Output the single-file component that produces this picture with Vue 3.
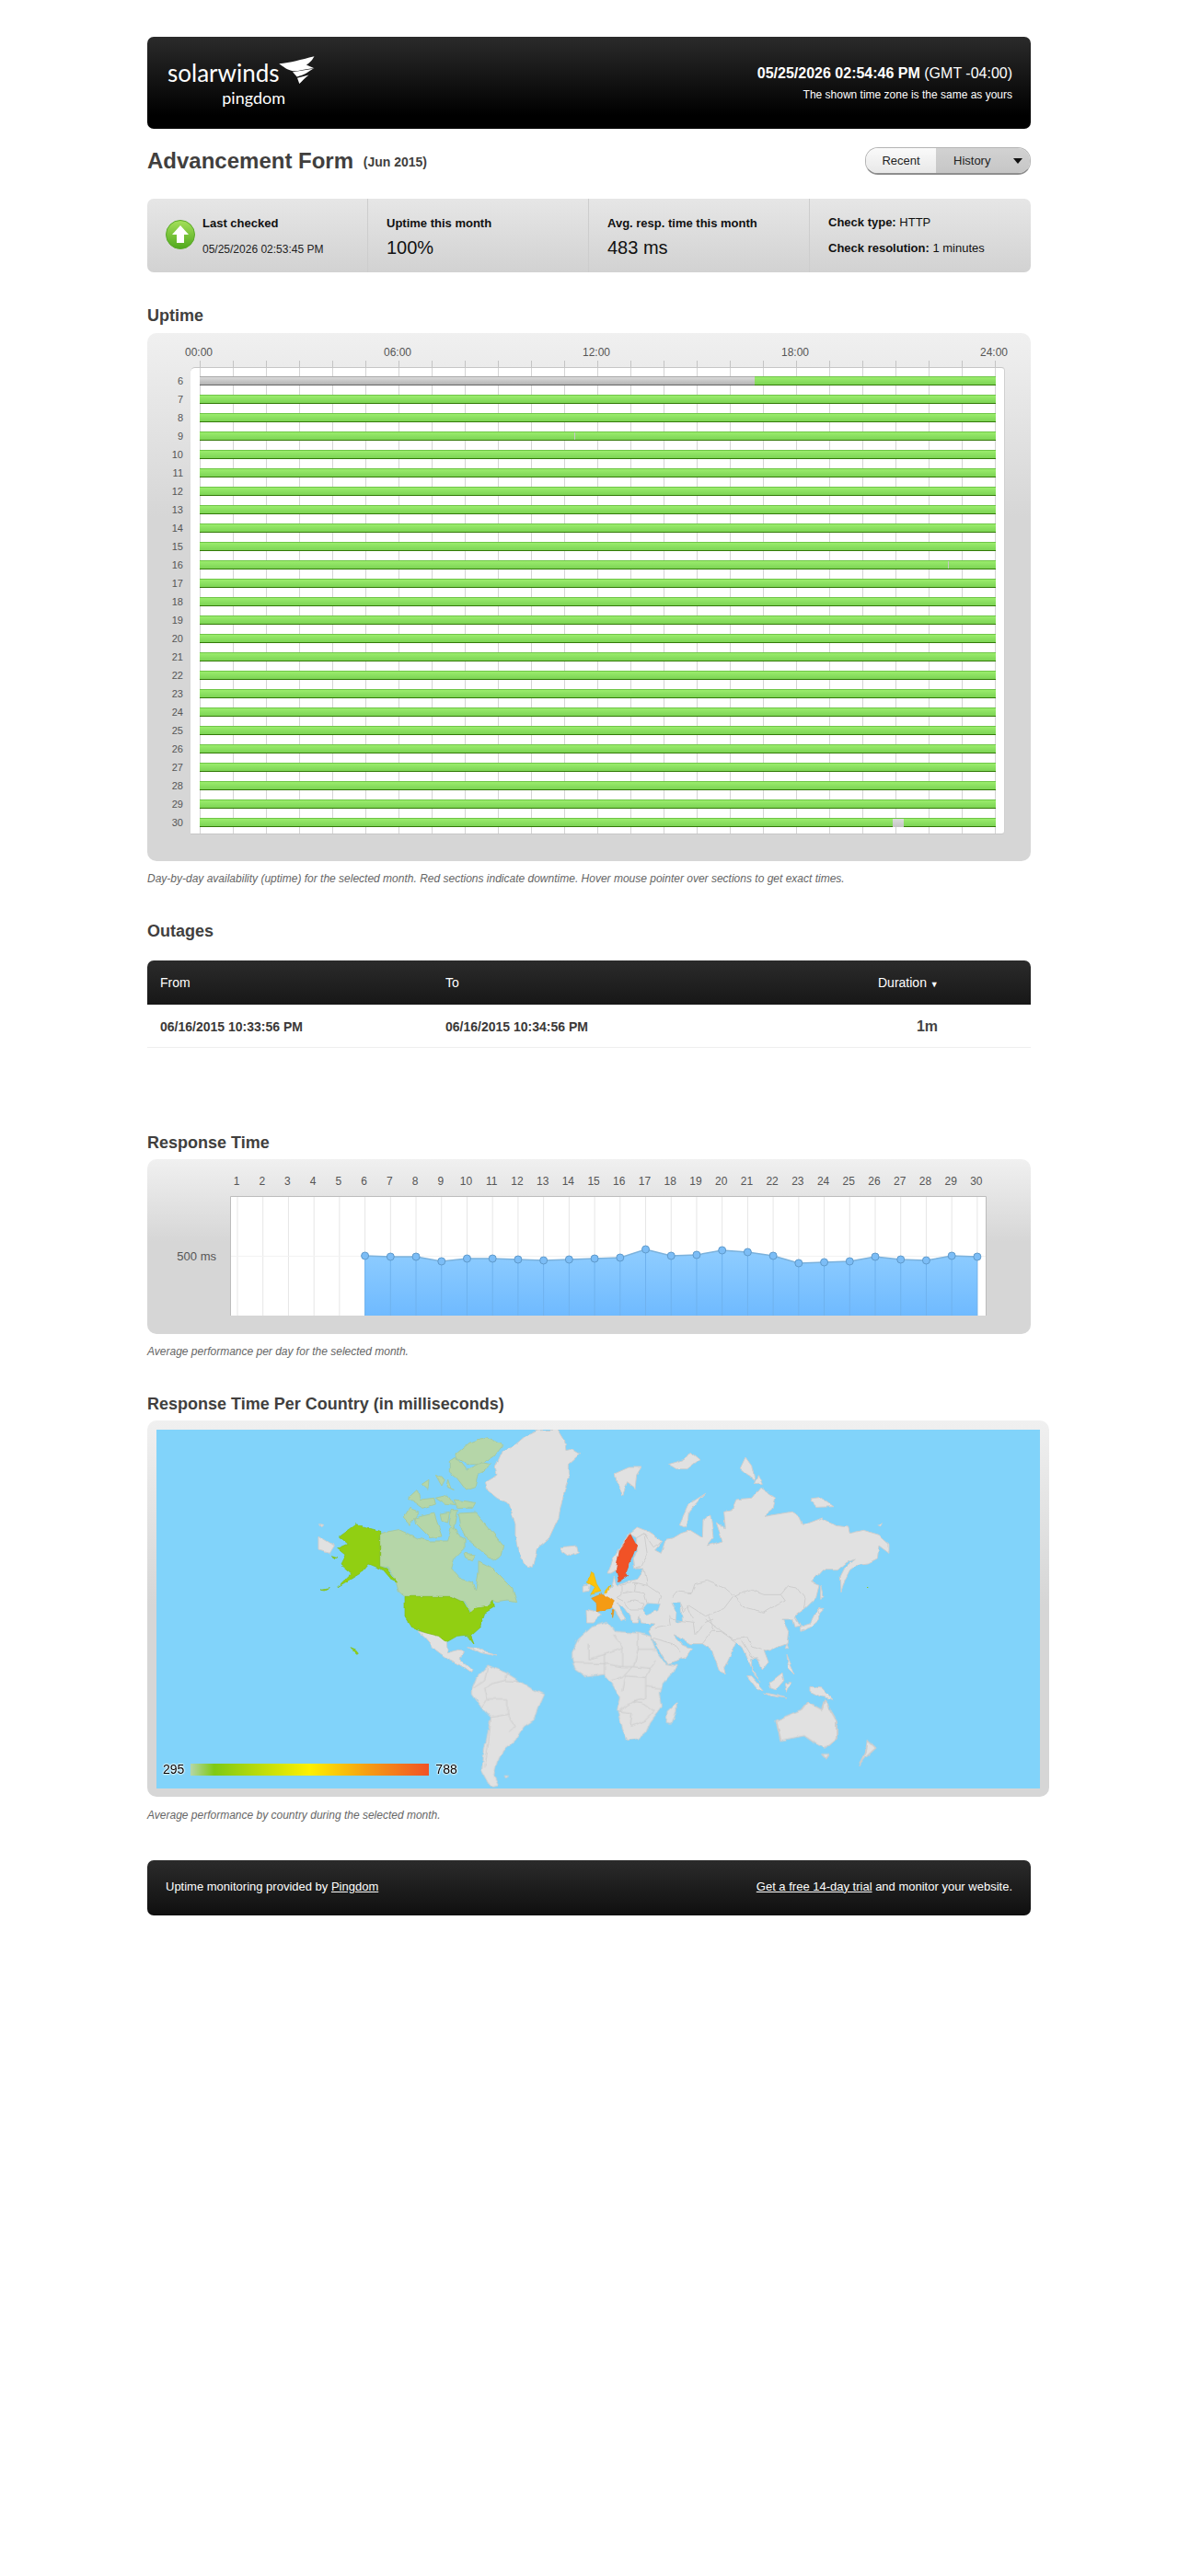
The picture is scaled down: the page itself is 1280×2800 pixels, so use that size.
<script setup>
import { computed } from 'vue'

const days = Array.from({ length: 25 }, (_, i) => i + 6)
const hours = ['00:00', '06:00', '12:00', '18:00', '24:00']

// uptime rows: down/unknown parts in px from the start of the bar
const unknown = { 6: [[0, 603, 'none']], 9: [[407, 1, 'tick']], 16: [[813, 1, 'tick']], 30: [[753, 12, 'seg']] }

const monthDays = Array.from({ length: 30 }, (_, i) => i + 1)
const dayX = d => 258 + (d - 1) * 27.72
const resp = { 6: 1365, 7: 1366, 8: 1366, 9: 1371, 10: 1368, 11: 1368, 12: 1369, 13: 1370, 14: 1369, 15: 1368, 16: 1367, 17: 1358, 18: 1365, 19: 1364, 20: 1359, 21: 1361, 22: 1365, 23: 1373, 24: 1372, 25: 1371, 26: 1366, 27: 1369, 28: 1370, 29: 1365, 30: 1366 }
const points = computed(() => days.map(d => ({ d, x: dayX(d), y: resp[d] })))
const linePts = computed(() => points.value.map(p => `${p.x},${p.y}`).join(' '))
const areaPts = computed(() => `${dayX(6)},1430 ${linePts.value} ${dayX(30)},1430`)
</script>

<template>
  <div class="page">
    <header class="top">
      <div class="logo">
        <div class="logo-sw">solarwinds</div>
        <div class="logo-pd">pingdom</div>
        <svg class="flame" viewBox="430 60 120 100" width="40" height="33">
          <path d="M430 88C470 85 500 75 546 64 537 80 530 86 520 92L546 103C510 105 490 115 475 112 455 108 445 98 430 88Z" fill="#fff" />
          <path d="M475 115 542 105C525 116 515 125 489 131Z" fill="#fff" />
          <path d="M490 135 528 125C515 135 505 146 497 154Z" fill="#fff" />
        </svg>
      </div>
      <div class="clock">
        <div class="clock-now"><b>05/25/2026 02:54:46 PM</b> (GMT -04:00)</div>
        <div class="clock-note">The shown time zone is the same as yours</div>
      </div>
    </header>

    <div class="title-row">
      <h1>Advancement Form <small>(Jun 2015)</small></h1>
      <div class="switch">
        <span class="sw-recent">Recent</span>
        <span class="sw-history">History<i class="caret"></i></span>
      </div>
    </div>

    <section class="stats">
      <div class="stat stat-first">
        <svg class="up-icon" viewBox="0 0 32 32" width="32" height="32">
          <defs>
            <linearGradient id="upg" x1="0" y1="0" x2="0" y2="1">
              <stop offset="0" stop-color="#a5e05a" />
              <stop offset="1" stop-color="#4fa81c" />
            </linearGradient>
          </defs>
          <circle cx="16" cy="16" r="15.5" fill="url(#upg)" stroke="#5aa82a" />
          <path d="M16 6 25 16H20V25H12V16H7Z" fill="#fff" />
        </svg>
        <div>
          <div class="stat-label">Last checked</div>
          <div class="stat-date">05/25/2026 02:53:45 PM</div>
        </div>
      </div>
      <div class="stat">
        <div>
          <div class="stat-label">Uptime this month</div>
          <div class="stat-value">100%</div>
        </div>
      </div>
      <div class="stat">
        <div>
          <div class="stat-label">Avg. resp. time this month</div>
          <div class="stat-value">483 ms</div>
        </div>
      </div>
      <div class="stat">
        <div class="stat-check">
          <div><b>Check type:</b> HTTP</div>
          <div><b>Check resolution:</b> 1 minutes</div>
        </div>
      </div>
    </section>

    <h2 class="h-uptime">Uptime</h2>
    <section class="panel uptime">
      <div class="hours">
        <span v-for="h in hours" :key="h">{{ h }}</span>
      </div>
      <div class="ticks"></div>
      <div class="up-body">
        <div class="up-labels">
          <div v-for="d in days" :key="d">{{ d }}</div>
        </div>
        <div class="up-chart">
          <div class="up-grid">
            <div v-for="d in days" :key="d" class="bar">
              <span
                v-for="(u, i) in unknown[d] || []"
                :key="i"
                :class="'bar-' + u[2]"
                :style="{ left: u[0] + 'px', width: u[1] + 'px' }"
              ></span>
            </div>
          </div>
        </div>
      </div>
    </section>
    <p class="note">Day-by-day availability (uptime) for the selected month. Red sections indicate downtime. Hover mouse pointer over sections to get exact times.</p>

    <h2 class="h-out">Outages</h2>
    <section class="outages">
      <div class="out-head">
        <span class="c-from">From</span>
        <span class="c-to">To</span>
        <span class="c-dur">Duration <i>▼</i></span>
      </div>
      <div class="out-row">
        <span class="c-from">06/16/2015 10:33:56 PM</span>
        <span class="c-to">06/16/2015 10:34:56 PM</span>
        <span class="c-len">1m</span>
      </div>
    </section>

    <h2 class="h-resp">Response Time</h2>
    <section class="panel resp">
      <svg viewBox="160 1260 960 190" width="960" height="190">
        <defs>
          <linearGradient id="areag" x1="0" y1="0" x2="0" y2="1">
            <stop offset="0" stop-color="#8fcdff" />
            <stop offset="1" stop-color="#6fbaff" />
          </linearGradient>
        </defs>
        <rect x="250.5" y="1300.5" width="821" height="129.5" fill="#fff" />
        <line v-for="d in monthDays" :key="'g' + d" :x1="dayX(d)" :x2="dayX(d)" y1="1300" y2="1430" stroke="#e6e6e6" />
        <line x1="250" x2="1071" y1="1365.5" y2="1365.5" stroke="#f2f2f2" />
        <path d="M250.5 1430V1300.5H1071.5V1430" fill="none" stroke="#bcbcbc" />
        <polygon :points="areaPts" fill="url(#areag)" />
        <line v-for="d in days" :key="'a' + d" :x1="dayX(d)" :x2="dayX(d)" :y1="resp[d]" y2="1430" stroke="#6fb2ee" />
        <polyline :points="linePts" fill="none" stroke="#7cb2dc" stroke-width="1.5" />
        <circle v-for="p in points" :key="p.d" :cx="p.x" :cy="p.y" r="4" fill="#7cbdf6" stroke="#5f9acb" />
        <text v-for="d in monthDays" :key="'t' + d" :x="dayX(d) - 1" y="1288" text-anchor="middle" class="day-label">{{ d }}</text>
        <text x="235" y="1370" text-anchor="end" class="ms-label">500 ms</text>
      </svg>
    </section>
    <p class="note">Average performance per day for the selected month.</p>

    <h2 class="h-map">Response Time Per Country (in milliseconds)</h2>
    <section class="panel map-panel">
      <div class="map">
        <svg viewBox="170 1554 960 390" width="960" height="390">
          <defs>
            <!-- roughens the hand traced coasts a bit -->
            <filter id="coast" filterUnits="userSpaceOnUse" x="170" y="1554" width="960" height="390" color-interpolation-filters="sRGB">
              <feTurbulence type="fractalNoise" baseFrequency="0.09" numOctaves="2" seed="4" />
              <feDisplacementMap in="SourceGraphic" scale="4" xChannelSelector="R" yChannelSelector="G" />
            </filter>
          </defs>
          <g filter="url(#coast)">
            <!-- Americas north + Atlantic side, traced at 3x from the top left crop -->
            <g transform="translate(320 1540) scale(.33333)">
              <path class="land" d="M622 212 660 190 655 165 680 110 715 95 750 65 790 45 860 42 880 75 885 110 905 105 932 122 895 155 895 200 880 240 860 330 830 395 790 430 775 490 755 485 730 440 720 390 720 350 700 285 660 265 630 240Z" />
              <path class="land" d="M870 425 920 420 925 440 890 455 870 440Z" />
              <path class="land" d="M1045 185 1090 165 1130 165 1115 190 1110 235 1085 215 1070 255 1050 215Z" />
              <path class="land" d="M78 388 130 420 115 445 78 435Z" />
              <path class="land" d="M80 350 92 352 88 358Z" />
              <path class="land" d="M402 700 430 705 470 715 495 735 500 770 530 760 550 762 540 790 580 825 575 835 540 810 500 790 460 760 425 720Z" />
              <path class="land" d="M560 752 600 755 660 780 610 770Z" />
              <path class="land" d="M940 550 965 545 960 565 940 568Z" />
              <path class="land" d="M948 628 985 635 1000 645 975 672 950 672Z" />
              <g class="ca">
                <path d="M278 380 340 368 400 395 440 405 500 405 515 345 535 385 555 395 555 430 520 465 512 495 545 530 580 540 590 570 600 510 600 470 640 490 680 530 710 560 725 605 695 600 660 605 650 598 630 615 575 640 555 605 510 586 360 586 340 570 325 520 300 490 278 488Z" />
                <path d="M528 120 570 85 625 65 680 92 650 130 600 155 560 155 530 135Z" />
                <path d="M505 145 525 130 560 175 610 150 640 155 600 190 590 230 560 240 530 200 505 180Z" />
                <path d="M535 315 590 312 640 370 680 420 672 455 650 470 600 430 565 400 545 370Z" />
                <path d="M390 330 455 315 480 390 440 395 395 350Z" />
                <path d="M355 330 375 298 405 310 375 352Z" />
                <path d="M370 265 400 238 410 270 455 265 460 285 420 298 395 280Z" />
                <path d="M460 265 500 255 525 290 490 285Z" />
                <path d="M520 270 590 280 580 298 530 298Z" />
                <path d="M475 315 505 310 500 345 480 340Z" />
                <path d="M510 305 532 305 520 370 505 350Z" />
                <path d="M460 190 490 205 480 225Z" />
                <path d="M415 220 438 205 435 238Z" />
                <path d="M500 205 510 235 520 238 495 228Z" />
                <path d="M555 445 590 450 580 470 560 462Z" />
              </g>
              <g class="us">
                <path d="M200 350 278 372 278 488 300 495 335 540 320 535 290 500 240 480 215 510 140 555 185 510 150 480 165 450 140 430 175 415 145 390Z" />
                <path d="M360 586 510 586 550 605 570 640 590 622 635 615 648 598 652 620 620 640 605 685 575 712 586 740 565 712 530 715 495 735 470 715 430 705 385 690 360 650Z" />
                <path d="M183 755 200 762 208 772 203 775Z" />
                <path d="M118 452 138 458 132 461Z" />
                <path d="M88 565 115 560 100 567Z" />
              </g>
            </g>

            <!-- Eurasia -->
            <g transform="translate(660 1560) scale(.33333)">
              <path class="land" d="M125 310 180 345 155 375 175 385 190 340 215 335 240 320 270 310 310 335 312 275 335 258 342 300 345 335 325 360 375 345 355 285 385 305 380 250 405 245 420 210 470 205 498 172 548 205 540 240 510 265 570 255 600 250 625 265 635 295 700 270 745 295 785 300 790 320 835 310 885 325 918 355 918 385 885 360 880 405 850 420 810 425 790 440 775 470 762 512 760 460 775 430 805 405 780 415 750 440 700 440 665 480 690 490 680 530 640 570 610 590 628 622 612 625 605 600 570 600 590 640 585 680 545 695 530 705 510 700 525 740 505 765 490 725 470 730 470 770 500 805 475 770 440 690 420 675 380 760 385 778 365 770 340 700 310 680 270 680 230 655 215 650 245 685 275 695 255 725 195 745 145 660 135 640 155 615 110 612 105 590 100 612 85 612 70 585 55 565 30 550 60 600 45 605 20 565 -10 545 -10 515 15 495 22 462 30 490 95 470 120 435 90 435 85 405 95 380 95 335Z" />
              <path class="water" d="M112 570 130 548 172 550 165 572 125 585Z" />
              <path class="water" d="M212 545 238 545 245 605 222 610 225 575Z" />
              <path class="lines" d="M210 530 225 510 275 515 285 485 325 475 360 490 385 500 415 525 470 505 510 520 565 520 590 490 615 495 645 535 640 570M415 525 450 565 510 580 560 550 580 540 565 520M410 525 380 565 345 580 320 590 265 555 250 575 240 550M320 600 360 630 410 665 455 660 470 690 500 700M205 600 280 610 285 650 320 610 345 600M310 680 340 640 370 640 420 675M440 670 470 720 500 735M145 660 215 680 240 710M40 490 90 480 130 490 175 520 165 550M45 490 45 520 30 530 60 545 90 540 120 550 110 570 75 570 55 545M90 480 85 510 50 515M85 510 120 515 130 550M130 490 120 435M200 590 205 620 155 630M260 555 280 600M330 590 350 640" />
              <path class="land" d="M0 450 20 400 70 325 100 300 125 310 180 345 150 365 120 320 95 335 75 323 40 375 28 440 12 450Z" />
              <path class="land" d="M95 335 120 320 130 390 110 430 90 435 85 405 95 380Z" />
              <path class="land" d="M235 290 265 225 320 190 300 210 265 250 260 300Z" />
              <path class="land" d="M432 110 450 72 470 100 480 145 455 130Z" />
              <path class="land" d="M478 160 490 128 505 160Z" />
              <path class="land" d="M660 210 700 205 735 230 680 232Z" />
              <path class="land" d="M200 95 250 80 270 55 300 80 260 110 225 110Z" />
              <path class="land" d="M880 295 895 290 890 300Z" />
              <path class="land" d="M455 785 470 785 510 830 490 830Z" />
              <path class="land" d="M510 840 560 850 585 858 530 850Z" />
              <path class="land" d="M525 810 570 775 575 800 550 830 530 825Z" />
              <path class="land" d="M580 810 600 805 585 838Z" />
              <path class="land" d="M660 820 700 825 735 862 690 850 660 835Z" />
              <path class="land" d="M585 715 595 740 612 780 590 760Z" />
              <path class="land" d="M585 680 590 695 580 695Z" />
              <path class="land" d="M680 575 692 560 692 600 665 625 630 640 628 625 660 615Z" />
              <path class="land" d="M685 565 705 565 690 580Z" />
              <path class="land" d="M695 490 705 530 695 535Z" />
              <path class="se" d="M75 323 95 360 60 450 68 455 38 476 28 440 40 375Z" />
              <rect x="845" y="495" width="5" height="3" fill="#8ec81a" />
            </g>

            <!-- South America + Africa -->
            <g transform="translate(480 1720) scale(.33333)">
              <path class="land" d="M100 350 120 300 150 270 210 295 250 320 290 345 335 365 315 410 305 445 268 470 240 515 200 545 180 590 170 630 185 660 160 665 130 610 140 540 160 440 130 410 100 365Z" />
              <path class="lines" d="M150 270 140 320 100 350M140 345 150 380 130 410M140 345 165 330 205 320 250 322M150 380 215 380 215 430 240 470 220 490M160 440 215 430M160 445 150 540 140 600M215 295 205 320" />
              <path class="land" d="M205 630 218 632 208 638Z" />
              <path class="land" d="M425 255 425 225 445 185 490 145 540 130 565 160 640 165 680 175 700 225 730 265 770 272 720 330 712 360 718 405 680 455 665 490 640 510 605 515 590 480 572 415 580 375 555 330 530 300 470 308 435 285Z" />
              <path class="lines" d="M480 200 480 250 530 235 590 215 560 170M590 215 590 275M640 165 640 218 695 218M640 218 625 275 590 275 530 265 530 235M425 262 530 265 530 300M625 275 680 280 700 255M555 320 590 310 620 275M680 280 665 310 600 305 590 355M665 310 665 380 620 390 575 420 620 425 615 470 665 450M665 340 715 345M620 390 655 395 690 420 660 450" />
              <path class="land" d="M765 392 765 420 750 462 732 460 735 420Z" />
            </g>

            <!-- Australia + NZ -->
            <g transform="translate(150 1500) scale(.63776 .33333)">
              <path class="land" d="M1087 1110 1130 1075 1140 1050 1165 1075 1170 1045 1190 1110 1190 1170 1170 1200 1150 1180 1135 1160 1095 1175Z" />
              <path class="land" d="M1165 1220 1178 1220 1172 1235Z" />
              <path class="land" d="M1243 1175 1257 1200 1240 1230 1228 1258 1240 1215Z" />
            </g>

            <!-- Western Europe on top of Eurasia -->
            <g transform="translate(320 1540) scale(.33333)">
              <path class="gb" d="M965 505 975 510 985 545 1000 570 965 580 980 555 955 540Z" />
              <path class="gb" d="M1010 575 1028 552 1020 575Z" />
              <path class="fr" d="M1000 578 1025 590 1042 602 1030 625 985 635 985 608 968 592Z" />
              <path class="fr" d="M1036 628 1042 630 1037 655Z" />
            </g>
          </g>
        </svg>
        <div class="legend">
          <span>295</span>
          <i class="legend-bar"></i>
          <span>788</span>
        </div>
      </div>
    </section>
    <p class="note note-map">Average performance by country during the selected month.</p>

    <footer class="foot">
      <span>Uptime monitoring provided by <a href="#">Pingdom</a></span>
      <span><a href="#">Get a free 14-day trial</a> and monitor your website.</span>
    </footer>
  </div>
</template>

<style scoped>
.page {
  width: 960px;
  margin: 0 auto;
  padding-top: 40px;
  font-family: "Liberation Sans", Arial, sans-serif;
  color: #444;
}
.top {
  height: 100px;
  border-radius: 7px;
  background: linear-gradient(#2b2b2b, #000 85%);
  display: flex;
  justify-content: space-between;
  align-items: center;
  padding: 0 20px;
  box-sizing: border-box;
  color: #fff;
}
.logo {
  position: relative;
  width: 140px;
  height: 62px;
  margin-top: 6px;
  text-align: right;
  color: #fff;
  font-family: Lato, "Open Sans", sans-serif;
  font-weight: 400;
}
.logo-sw {
  font-size: 26px;
  line-height: 30px;
  width: 130px;
  margin-left: 2px;
  text-align: left;
  margin-top: 2px;
}
.logo-pd {
  font-size: 18px;
  line-height: 20px;
  width: 130px;
  margin-top: 2px;
}
.flame {
  position: absolute;
  left: 123px;
  top: -2px;
}
.clock {
  text-align: right;
}
.clock-now {
  font-size: 16px;
  line-height: 20px;
}
.clock-note {
  font-size: 12px;
  line-height: 16px;
  margin-top: 5px;
}
.title-row {
  margin-top: 20px;
  height: 30px;
  display: flex;
  justify-content: space-between;
  align-items: center;
}
h1 {
  margin: 0;
  font-size: 24px;
  line-height: 30px;
  color: #413f3e;
}
h1 small {
  font-size: 14px;
  margin-left: 4px;
  vertical-align: 2px;
}
.switch {
  display: flex;
  width: 180px;
  height: 30px;
  box-sizing: border-box;
  border: 1px solid #b4b4b4;
  border-bottom: 2px solid #8e8e8e;
  border-radius: 14px;
  overflow: hidden;
  font-size: 13px;
  color: #222;
  line-height: 27px;
}
.sw-recent {
  width: 76px;
  text-align: center;
  background: linear-gradient(#fafafa, #e8e8e8);
}
.sw-history {
  flex: 1;
  padding-left: 19px;
  background: linear-gradient(#d2d2d2, #c6c6c6);
  position: relative;
}
.caret {
  position: absolute;
  right: 8px;
  top: 11px;
  border: 5px solid transparent;
  border-top: 6px solid #111;
  border-bottom: 0;
}
.stats {
  margin-top: 26px;
  height: 80px;
  border-radius: 7px;
  background: linear-gradient(#e6e6e6, #d2d2d2);
  display: flex;
  color: #111;
}
.stat {
  width: 240px;
  box-sizing: border-box;
  padding: 19px 0 0 20px;
  border-left: 1px solid #cdcdcd;
}
.stat:first-child {
  border-left: 0;
}
.stat-first {
  width: 239px;
  padding-left: 20px;
  display: flex;
  gap: 8px;
}
.up-icon {
  margin-top: 4px;
}
.stat-label {
  font-size: 13px;
  font-weight: bold;
  line-height: 16px;
}
.stat-date {
  font-size: 12px;
  line-height: 16px;
  margin-top: 12px;
  color: #222;
}
.stat-value {
  font-size: 20px;
  line-height: 24px;
  margin-top: 6px;
}
.stat-check {
  font-size: 13px;
  line-height: 16px;
}
.stat-check div + div {
  margin-top: 12px;
}
.stat:last-child {
  padding-top: 18px;
}
h2 {
  margin: 0;
  font-size: 18px;
  line-height: 20px;
  color: #413f3e;
}
.h-uptime {
  margin-top: 37px;
}
.panel {
  border-radius: 10px;
  background: linear-gradient(#f0f0f0, #d6d6d6 200px);
}
.uptime {
  margin-top: 9px;
  height: 574px;
  box-sizing: border-box;
  padding-top: 14px;
}
.hours {
  display: flex;
  justify-content: space-between;
  width: 904px;
  margin-left: 36px;
  height: 16px;
  font-size: 12px;
  line-height: 14px;
  color: #555;
}
.hours span {
  width: 40px;
  text-align: center;
}
.ticks {
  margin-left: 57px;
  width: 865px;
  height: 7px;
  background: repeating-linear-gradient(90deg, #c4c4c4 0 1px, transparent 1px 36px);
}
.up-body {
  display: flex;
}
.up-labels {
  width: 47px;
  box-sizing: border-box;
  padding: 5px 8px 0 0;
  text-align: right;
  font-size: 11px;
  line-height: 20px;
  color: #555;
}
.up-chart {
  width: 885px;
  height: 508px;
  box-sizing: border-box;
  background: #fff;
  border-top: 1px solid #c6c6c6;
  border-bottom: 1px solid #c6c6c6;
  border-right: 1px solid #d0d0d0;
  border-radius: 5px 4px 4px 0;
  padding-left: 10px;
}
.up-grid {
  width: 865px;
  height: 506px;
  padding-top: 9px;
  box-sizing: border-box;
  background: repeating-linear-gradient(90deg, #d4d4d4 0 1px, transparent 1px 36px);
}
.bar {
  position: relative;
  height: 10px;
  margin-bottom: 10px;
  box-sizing: border-box;
  border-top: 1px solid #70c648;
  border-bottom: 1px solid #337a08;
  background: linear-gradient(#9aec6c, #7dd455);
}
.bar-none {
  position: absolute;
  top: -1px;
  bottom: -1px;
  box-sizing: border-box;
  border-top: 1px solid #a8a8a8;
  border-bottom: 1px solid #666;
  background: linear-gradient(#dadada, #b4b4b4);
}
.bar-tick {
  position: absolute;
  top: 0;
  bottom: 0;
  background: #c8c8c8;
}
.bar-seg {
  position: absolute;
  top: 0;
  bottom: -1px;
  background: linear-gradient(#dcdcdc, #c4c4c4);
}
.note {
  margin: 11px 0 0;
  font-size: 12px;
  line-height: 16px;
  font-style: italic;
  color: #666;
}
.h-out {
  margin-top: 39px;
}
.outages {
  margin-top: 22px;
}
.out-head {
  height: 48px;
  border-radius: 7px 7px 0 0;
  background: linear-gradient(#2b2b2b, #171717);
  color: #fff;
  font-size: 14px;
  display: flex;
  align-items: center;
}
.out-head i {
  font-style: normal;
  font-size: 9px;
}
.c-from {
  margin-left: 14px;
  width: 310px;
}
.c-to {
  width: 470px;
}
.out-row {
  height: 47px;
  box-sizing: border-box;
  border-bottom: 1px solid #eee;
  display: flex;
  align-items: center;
  font-size: 14px;
  font-weight: bold;
  color: #3b3938;
  padding-top: 1px;
}
.c-len {
  width: 65px;
  text-align: right;
  font-size: 16px;
  font-weight: bold;
  color: #444;
}
.h-resp {
  margin-top: 93px;
}
.resp {
  margin-top: 8px;
  height: 190px;
  background: linear-gradient(#f0f0f0, #d6d6d6 90px);
}
.resp svg {
  display: block;
}
.day-label {
  font-size: 12px;
  fill: #555;
}
.ms-label {
  font-size: 13px;
  fill: #555;
}
.h-map {
  margin-top: 39px;
}
.map-panel {
  margin-top: 8px;
  width: 980px;
  height: 409px;
  box-sizing: border-box;
  padding: 10px 10px 9px;
}
.map {
  position: relative;
  width: 960px;
  height: 390px;
  overflow: hidden;
  background: #81d3fa;
}
.map svg {
  display: block;
}
.land {
  fill: #e1e1e1;
  stroke: #cdcdcd;
  stroke-width: 3;
  stroke-linejoin: round;
}
.water {
  fill: #81d3fa;
  stroke: #cdcdcd;
  stroke-width: 2;
}
.lines {
  fill: none;
  stroke: #cdcdcd;
  stroke-width: 3;
  stroke-linejoin: round;
}
.ca path {
  fill: #b5d6a8;
  stroke: #a6c9a0;
  stroke-width: 3;
  stroke-linejoin: round;
}
.us path {
  fill: #91cf12;
  stroke: #82bc10;
  stroke-width: 2;
}
.gb {
  fill: #fcc40c;
  stroke: #e8b40a;
  stroke-width: 2;
}
.fr {
  fill: #f59b14;
  stroke: #e58e10;
  stroke-width: 2;
}
.se {
  fill: #f15226;
  stroke: #e24a20;
  stroke-width: 2;
}
.legend {
  position: absolute;
  left: 7px;
  bottom: 14px;
  display: flex;
  align-items: center;
  gap: 7px;
  font-size: 14px;
  line-height: 13px;
  color: #000;
  text-shadow: 0 0 2px #fff, 0 0 2px #fff, 0 0 2px #fff, 0 0 2px #fff;
}
.legend-bar {
  width: 259px;
  height: 13px;
  background: linear-gradient(90deg, #b5d6a8, #7fc914 10%, #fef000 50%, #f59b14 75%, #f15226);
}
.note-map {
  margin-top: 12px;
}
.foot {
  margin-top: 41px;
  height: 60px;
  border-radius: 7px;
  background: linear-gradient(#2b2b2b, #0f0f0f);
  color: #fff;
  font-size: 13px;
  display: flex;
  justify-content: space-between;
  align-items: center;
  padding: 0 20px 4px;
  box-sizing: border-box;
}
.foot a {
  color: #fff;
}
</style>

<style>
body {
  margin: 0;
  background: #fff;
}
</style>
